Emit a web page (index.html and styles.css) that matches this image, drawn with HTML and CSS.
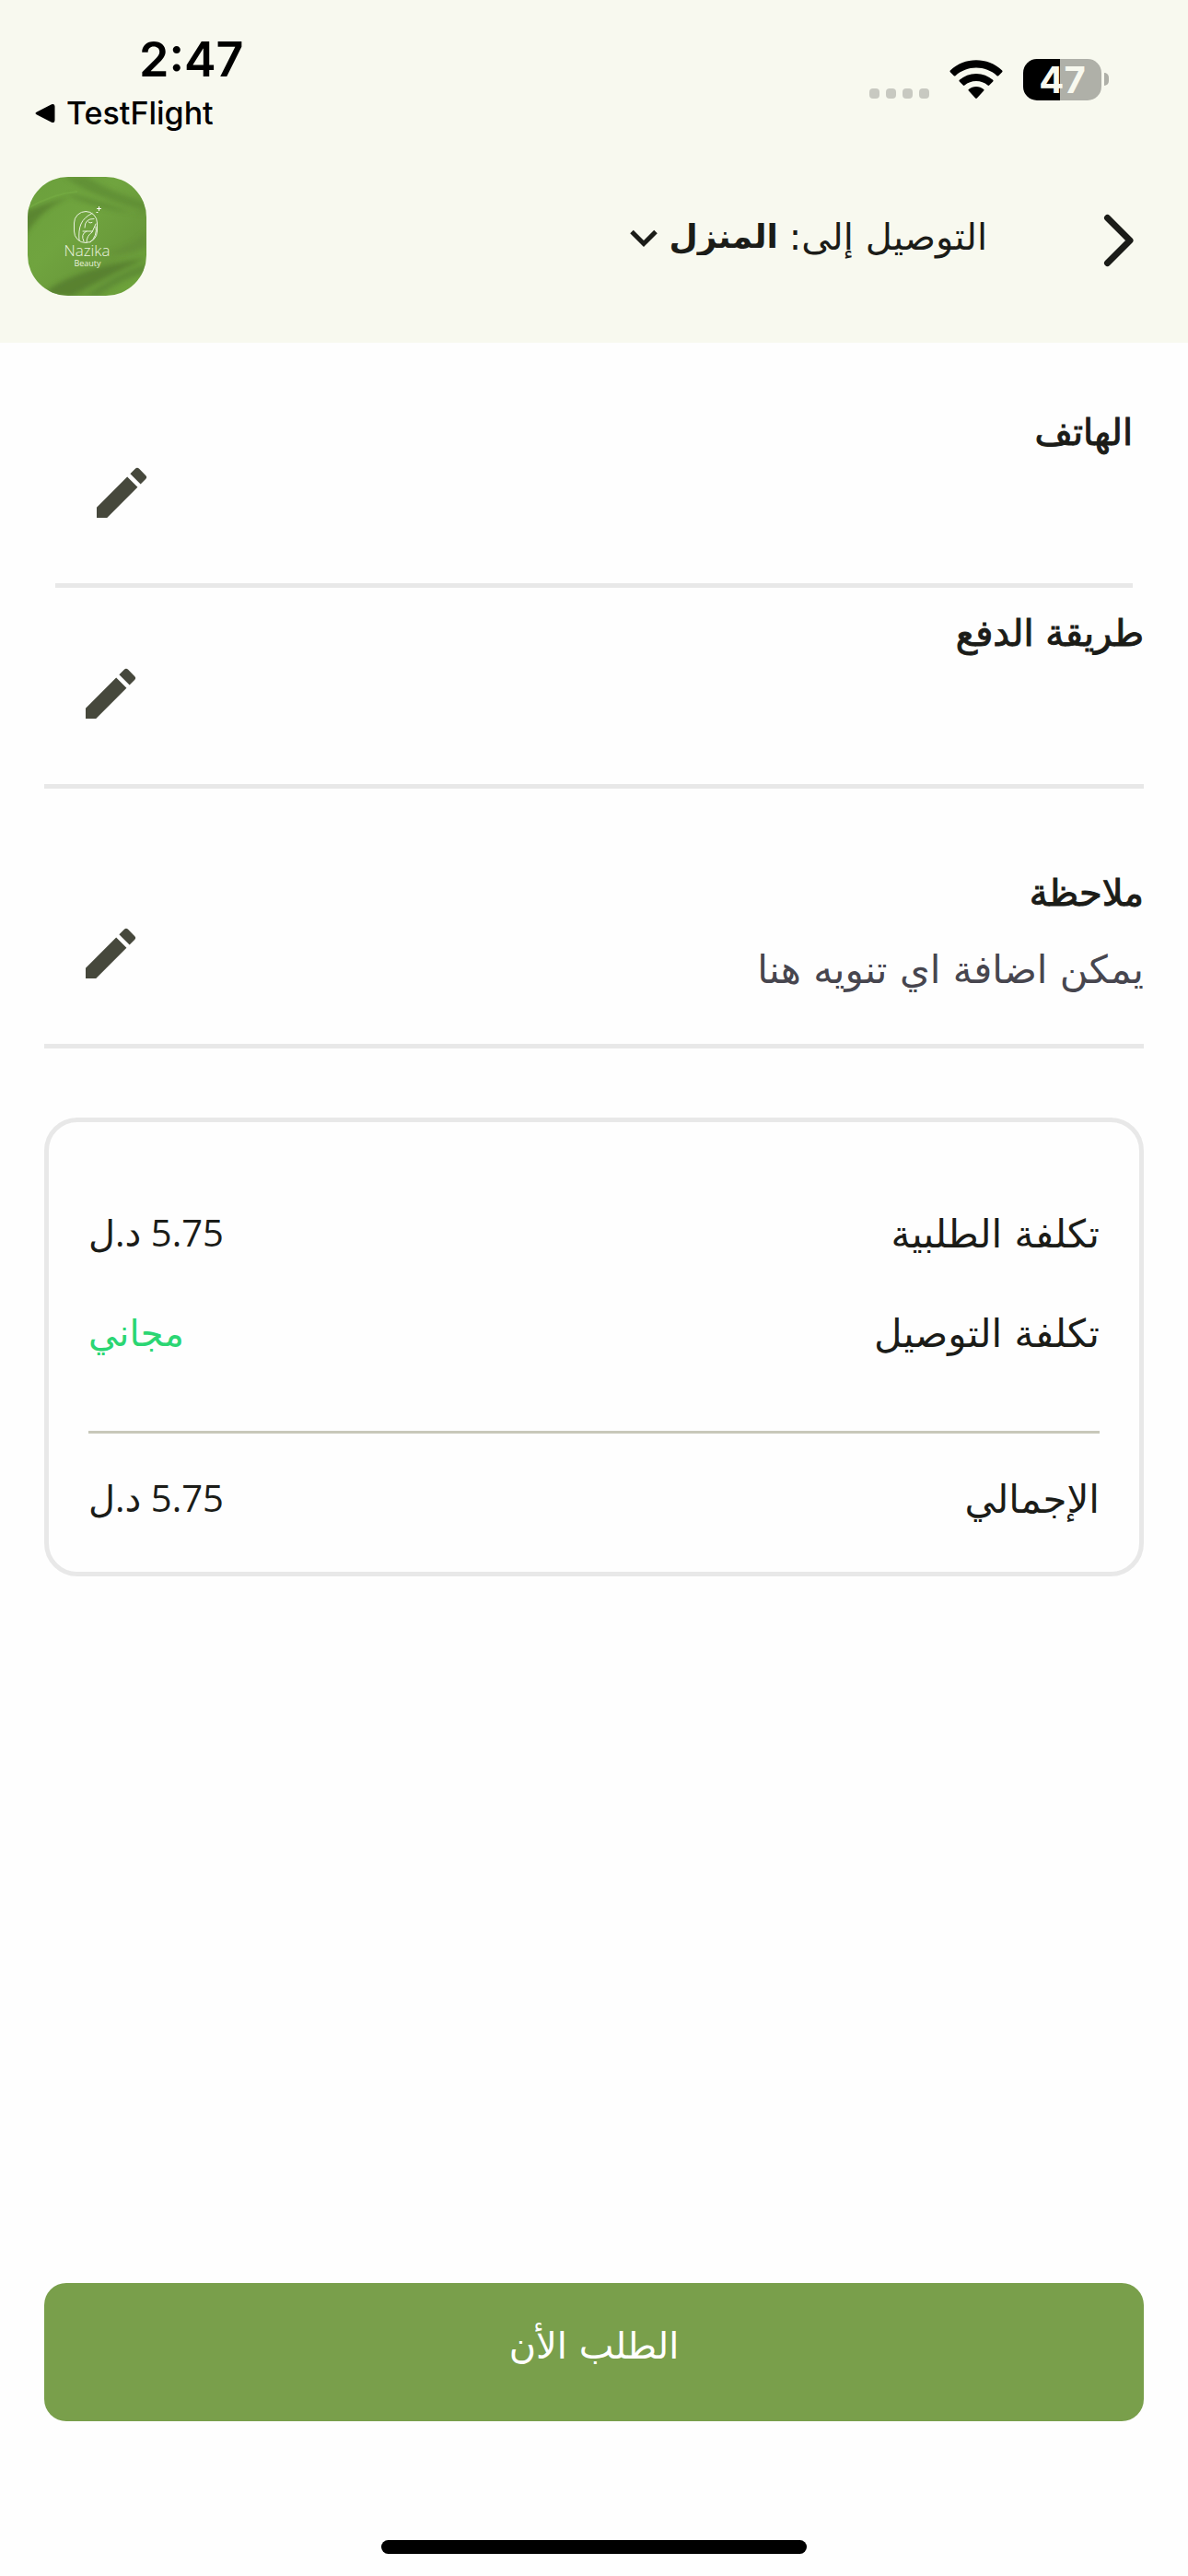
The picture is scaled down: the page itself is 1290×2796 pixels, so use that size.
FILE: index.html
```html
<!DOCTYPE html>
<html lang="ar" dir="rtl">
<head>
<meta charset="utf-8">
<meta name="viewport" content="width=device-width, initial-scale=1">
<title>Nazika Beauty</title>
<link rel="stylesheet" href="styles.css">
</head>
<body>
<div class="screen">
  <header class="top">
    <div class="status" dir="ltr">
      <div class="status-left">
        <time class="clock">2:47</time>
        <a class="return" href="#">
          <svg class="return-arrow" viewBox="0 0 22 22" aria-hidden="true"><path d="M2 9.600 18 1.300Q21.500 0 21.500 3.500v15Q21.500 22 18 20.700L2 12.600Q-1 11 2 9.600Z"/></svg>
          <span>TestFlight</span>
        </a>
      </div>
      <div class="status-right">
        <div class="signal"><i></i><i></i><i></i><i></i></div>
        <svg class="wifi" viewBox="0 0 58 43" aria-hidden="true">
          <path d="M.8 11.500C9 4 18.500.3 29 .3S49 4 57.200 11.500q.8.900 0 1.700l-4 4q-.8.800-1.700 0C45 11.500 37.500 8.600 29 8.600S13 11.500 6.500 17.200q-.9.800-1.700 0l-4-4q-.8-.8 0-1.700Z"/>
          <path d="M10.800 21.800C16 17.200 22 14.900 29 14.900s13 2.300 18.200 6.900q.9.900 0 1.700l-4 4q-.8.800-1.700 0C38 24.500 33.800 22.900 29 22.900s-9 1.600-12.500 4.600q-.9.800-1.700 0l-4-4q-.9-.8 0-1.700Z"/>
          <path d="M20.800 31.900C23.200 29.900 26 28.900 29 28.900s5.800 1 8.200 3q.9.900 0 1.700l-7.300 8q-.9.900-1.800 0l-7.300-8q-.9-.8 0-1.700Z"/>
        </svg>
        <div class="battery"><span class="battery-level">47</span><i class="battery-cap"></i></div>
      </div>
    </div>
    <div class="bar">
      <button class="back" type="button" aria-label="رجوع">
        <svg viewBox="0 0 34 58" aria-hidden="true"><path d="M4.500 4.500 29 29 4.500 53.500"/></svg>
      </button>
      <div class="deliver">
        <label for="place">التوصيل إلى:</label>
        <select id="place" class="place"><option>المنزل</option></select>
        <svg class="caret" viewBox="0 0 30 20" aria-hidden="true"><path d="M2 2.500 15 15.500 28 2.500"/></svg>
      </div>
      <svg class="logo" viewBox="0 0 129 129" role="img" aria-label="Nazika Beauty">
        <defs>
          <clipPath id="tile"><rect width="129" height="129" rx="44"/></clipPath>
          <linearGradient id="silk" x1="0" y1="0" x2="1" y2="1"><stop offset="0" stop-color="#6ba03c"/><stop offset=".4" stop-color="#70a43f"/><stop offset=".7" stop-color="#69993a"/><stop offset="1" stop-color="#70a83c"/></linearGradient>
          <filter id="soft" x="-20%" y="-20%" width="140%" height="140%"><feGaussianBlur stdDeviation="2.500"/></filter>
        </defs>
        <g clip-path="url(#tile)">
          <rect width="129" height="129" fill="url(#silk)"/>
          <g filter="url(#soft)" opacity=".8">
            <path d="M-4 66Q18 28 56 19Q26 26-4 38Z" fill="#567f2f"/>
            <path d="M40 0Q70 22 129 37V28Q90 16 64 0Z" fill="#5f8d34"/>
            <path d="M44 18Q75 24 100 34T129 38Q96 42 50 23Z" fill="#5f8d35"/>
            <path d="M20 124Q52 100 129 88Q86 108 48 129H30Z" fill="#547c2e"/>
            <path d="M129 104Q100 112 76 129H64Q96 104 129 94Z" fill="#5c8834"/>
            <path d="M129 58Q110 78 84 82Q110 86 129 76Z" fill="#648f39"/>
          </g>
          <path d="M0 34Q28 18 54 16" fill="none" stroke="#77ae45" stroke-width="2" opacity=".6"/>
        </g>
        <g fill="none" stroke="#eaf2df" stroke-width="1" stroke-linecap="round">
          <rect x="50.500" y="37.500" width="25" height="34" rx="12.500"/>
          <path d="M56 69Q55 58 58 51T70 39.500M61 70Q57 62 64 59M62 55Q62 45 72 45.500M66 49Q68 51 70 49.500M64 71Q64 64 70 60L74 51M60 59H66L70 59M68 71Q76 64 74 54"/>
          <path d="M77.500 32.500v4M75.500 34.500h4M75 38.500h1" stroke="#fff"/>
        </g>
        <text x="64.500" y="86" class="logo-name">Nazika</text>
        <text x="65" y="97" class="logo-sub">Beauty</text>
      </svg>
    </div>
  </header>

  <main class="content">
    <section class="field field-phone">
      <h2>الهاتف</h2>
      <div class="field-body">
        <p></p>
        <button class="edit" type="button" aria-label="تعديل الهاتف"><svg viewBox="0 0 24 24" aria-hidden="true"><path d="M3 17.250V21h3.750L17.810 9.940l-3.750-3.750L3 17.250ZM20.710 7.040a1 1 0 0 0 0-1.410l-2.340-2.340a1 1 0 0 0-1.410 0l-1.830 1.830 3.750 3.750 1.830-1.830Z"/></svg></button>
      </div>
    </section>
    <section class="field">
      <h2>طريقة الدفع</h2>
      <div class="field-body">
        <p></p>
        <button class="edit" type="button" aria-label="تعديل طريقة الدفع"><svg viewBox="0 0 24 24" aria-hidden="true"><path d="M3 17.250V21h3.750L17.810 9.940l-3.750-3.750L3 17.250ZM20.710 7.040a1 1 0 0 0 0-1.410l-2.340-2.340a1 1 0 0 0-1.410 0l-1.830 1.830 3.750 3.750 1.830-1.830Z"/></svg></button>
      </div>
    </section>
    <section class="field field-note">
      <h2>ملاحظة</h2>
      <div class="field-body">
        <p>يمكن اضافة اي تنويه هنا</p>
        <button class="edit" type="button" aria-label="تعديل ملاحظة"><svg viewBox="0 0 24 24" aria-hidden="true"><path d="M3 17.250V21h3.750L17.810 9.940l-3.750-3.750L3 17.250ZM20.710 7.040a1 1 0 0 0 0-1.410l-2.340-2.340a1 1 0 0 0-1.410 0l-1.830 1.830 3.750 3.750 1.830-1.830Z"/></svg></button>
      </div>
    </section>

    <dl class="summary">
      <div class="line"><dt>تكلفة الطلبية</dt><dd>5.75 د.ل</dd></div>
      <div class="line"><dt>تكلفة التوصيل</dt><dd class="free">مجاني</dd></div>
      <div class="line total"><dt>الإجمالي</dt><dd>5.75 د.ل</dd></div>
    </dl>
  </main>

  <footer class="actions">
    <button class="order" type="button">الطلب الأن</button>
    <div class="home-bar"></div>
  </footer>
</div>
</body>
</html>
```
FILE: styles.css
```css
* { box-sizing: border-box; }

body {
  margin: 0;
  background: #fefefe;
  color: #1b1c18;
  font-family: "DejaVu Sans", sans-serif;
  font-size: 40px;
  font-weight: 400;
}

h2, p, dl, dd { margin: 0; }

button {
  border: 0;
  padding: 0;
  background: none;
  color: inherit;
  font: inherit;
}

svg { display: block; }

.screen {
  display: flex;
  flex-direction: column;
  min-height: 100vh;
}

/* Header */
.top { background: #f8f9ef; }

.status {
  display: flex;
  justify-content: space-between;
  height: 168px;
  padding: 34px 86px 0 38px;
  color: #000;
  font-family: Inter, sans-serif;
}

.status-left {
  display: flex;
  flex-direction: column;
}

.clock {
  padding-left: 113px;
  font-size: 52px;
  font-weight: 600;
  line-height: 62px;
}

.return {
  display: flex;
  align-items: center;
  gap: 12px;
  color: inherit;
  font-size: 34px;
  font-weight: 500;
  line-height: 54px;
  text-decoration: none;
}

.return-arrow { width: 22px; }

.status-right {
  display: flex;
  align-items: center;
  height: 52px;
  margin-top: 26px;
}

.signal {
  display: flex;
  gap: 7px;
  margin: 30px 22px 0 0;
}

.signal i {
  width: 11px;
  height: 11px;
  border-radius: 4px;
  background: #c8c9c1;
}

.wifi {
  width: 58px;
  margin-right: 22px;
}

.battery {
  display: flex;
  align-items: center;
  gap: 3px;
}

.battery-level {
  width: 85px;
  height: 45px;
  border-radius: 15px;
  background: linear-gradient(90deg, #000 47%, #afb0a8 47%);
  color: #f8f9ef;
  font-size: 40px;
  font-weight: 700;
  line-height: 45px;
  text-align: center;
}

.battery-cap {
  width: 5px;
  height: 14px;
  border-radius: 0 5px 5px 0;
  background: #afb0a8;
}

.bar {
  display: flex;
  align-items: center;
  height: 204px;
  padding: 0 58px 27px 30px;
}

.back { padding-top: 8px; }

.back svg {
  width: 34px;
  fill: none;
  stroke: #1b1c18;
  stroke-width: 7;
  stroke-linecap: round;
  stroke-linejoin: round;
}

.deliver {
  display: flex;
  flex: 1;
  align-items: center;
  padding-right: 126px;
}

.place {
  appearance: none;
  margin: 0 12px;
  border: 0;
  padding: 0;
  background: none;
  color: inherit;
  font: inherit;
  font-size: 36px;
  font-weight: 700;
}

.caret {
  width: 30px;
  margin-top: 4px;
  fill: none;
  stroke: #1b1c18;
  stroke-width: 5;
}

.logo { width: 129px; }

.logo-name, .logo-sub {
  fill: #eaf2df;
  font-family: "Open Sans", sans-serif;
  text-anchor: middle;
  direction: ltr;
}

.logo-name {
  font-size: 17px;
  font-weight: 300;
}

.logo-sub { font-size: 9px; }

/* Editable fields */
.content { padding: 0 48px; }

.field {
  padding-top: 19px;
  border-bottom: 5px solid #e8e8e8;
}

.field-phone {
  margin: 0 12px;
  padding-top: 67px;
}

.field-note { padding-top: 83px; }

.field h2 {
  font-size: 40px;
  font-weight: 400;
  line-height: 60px;
  -webkit-text-stroke: 1px;
}

.field-body {
  display: flex;
  justify-content: space-between;
  min-height: 134px;
  padding-left: 36px;
}

.field-body p {
  padding-top: 24px;
  color: #47464f;
  font-size: 42px;
  line-height: 60px;
}

.edit {
  width: 72px;
  height: 72px;
}

.edit svg { fill: #46483c; }

/* Cost summary */
.summary {
  margin-top: 75px;
  border: 5px solid #e8e8e8;
  border-radius: 36px;
  padding: 72px 43px 45px;
}

.line {
  display: flex;
  justify-content: space-between;
  height: 108px;
  line-height: 100px;
}

.line dt { font-size: 42px; }

.line dd {
  font-family: "Open Sans", "DejaVu Sans", sans-serif;
  line-height: 96px;
}

.line .free { color: #2bd673; }

.total {
  margin-top: 47px;
  border-top: 3px solid #c8c8ba;
  padding-top: 22px;
}

/* Bottom actions */
.actions {
  margin-top: auto;
  padding: 0 48px 24px;
}

.order {
  display: block;
  width: 100%;
  height: 150px;
  border-radius: 24px;
  padding-bottom: 14px;
  background: #799f4b;
  color: #fff;
}

.home-bar {
  width: 462px;
  height: 15px;
  margin: 129px auto 0;
  border-radius: 8px;
  background: #000;
}
```
